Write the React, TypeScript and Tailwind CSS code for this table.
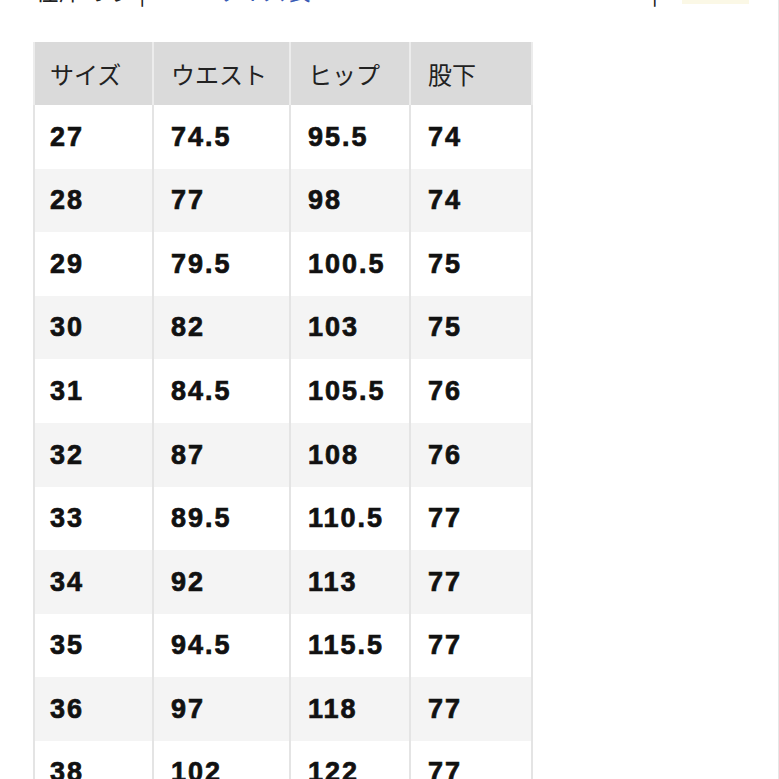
const headers = ["サイズ", "ウエスト", "ヒップ", "股下"];

const rows: string[][] = [
  ["27", "74.5", "95.5", "74"],
  ["28", "77", "98", "74"],
  ["29", "79.5", "100.5", "75"],
  ["30", "82", "103", "75"],
  ["31", "84.5", "105.5", "76"],
  ["32", "87", "108", "76"],
  ["33", "89.5", "110.5", "77"],
  ["34", "92", "113", "77"],
  ["35", "94.5", "115.5", "77"],
  ["36", "97", "118", "77"],
  ["38", "102", "122", "77"],
];

const cols = "grid grid-cols-[121px_137px_120px_122px]";

export default function App() {
  return (
    <div className="w-[779px] h-[779px] overflow-hidden bg-white border-r border-[#e6e6e6] font-['Liberation_Sans','Noto_Sans_CJK_JP',sans-serif]">
      {/* header line, mostly scrolled off the top */}
      <div className="-mt-[24px] h-[28px] flex items-end pl-[35px] text-[24px] leading-[28px] font-['Noto_Sans_CJK_JP',sans-serif]">
        <span className="text-[#222]">在庫あり</span>
        <span className="ml-2 text-[#222]">|</span>
        <span className="ml-[70px] text-[#3b5bb5]">サイズ表</span>
        <span className="ml-auto text-[#222]">|</span>
        <span className="ml-[24px] mr-[29px] w-[67px] h-[28px] bg-[#fbf8e6]" />
      </div>

      <div className="mt-[38px] ml-[33px] w-[500px]">
        <div className={`${cols} h-[63px] bg-[#dadada]`}>
          {headers.map((h, i) => (
            <div
              key={h}
              className={`flex items-center border-r-2 border-[#ececec] text-[24px] text-[#222] font-['Noto_Sans_CJK_JP',sans-serif] ${i === 0 ? "border-l-2 pl-[15px]" : "pl-[17px]"}`}
            >
              {h}
            </div>
          ))}
        </div>
        {rows.map((r, ri) => (
          <div key={r[0]} className={`${cols} h-[63.6px] ${ri % 2 === 1 ? "bg-[#f4f4f4]" : "bg-white"}`}>
            {r.map((v, i) => (
              <div
                key={i}
                className={`flex items-center border-r-2 border-[#e4e4e4] text-[27px] font-bold tracking-[2px] text-[#111] [-webkit-text-stroke:0.7px_#111] ${i === 0 ? "border-l-2 pl-[15px]" : "pl-[17px]"}`}
              >
                {v}
              </div>
            ))}
          </div>
        ))}
      </div>
    </div>
  );
}
